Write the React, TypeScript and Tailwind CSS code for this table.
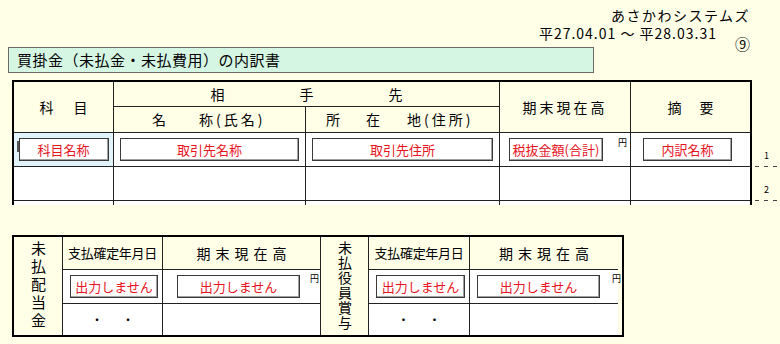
import React from "react";

const jp = "font-['Noto_Sans_CJK_JP','Noto_Sans',sans-serif]";

function InBox({ label, w }: { label: string; w: string }) {
  return (
    <div
      className={`${w} flex h-[23px] items-center justify-center border border-[#3a3a3a] bg-white text-[13px] leading-none text-[#e8141e] shadow-[inset_-1px_-1px_0_#a0a0a0]`}
    >
      {label}
    </div>
  );
}

function Yen({ className }: { className: string }) {
  return <span className={`absolute text-[9px] leading-none text-black ${className}`}>円</span>;
}

function MainTable() {
  const cell = "border-r border-b border-[#222]";
  return (
    <div className="h-[125px] w-[740px] overflow-hidden border-x-2 border-t-2 border-black">
      <div className="grid grid-cols-[100px_192px_194px_131px_119px] grid-rows-[25px_26px_34px_34px_34px]">
        {/* header */}
        <div className={`${cell} row-span-2 flex items-center justify-center text-[14px] tracking-[20px] pl-[20px]`}>
          科目
        </div>
        <div className={`${cell} col-span-2 flex items-center justify-center text-[14px]`}>
          <div className="flex w-[192px] justify-between">
            <span>相</span>
            <span>手</span>
            <span>先</span>
          </div>
        </div>
        <div className={`${cell} row-span-2 flex items-center justify-center text-[14px] tracking-[3px]`}>
          期末現在高
        </div>
        <div className="row-span-2 flex items-center justify-center border-b border-[#222] text-[14px] tracking-[18px] pl-[18px]">
          摘要
        </div>
        <div className={`${cell} flex items-center text-[14px]`}>
          <span className="ml-[38px]">名</span>
          <span className="ml-[33px] tracking-[3px]">称(氏名)</span>
        </div>
        <div className={`${cell} flex items-center text-[14px]`}>
          <span className="ml-[20px]">所</span>
          <span className="ml-[26px]">在</span>
          <span className="ml-[27px] tracking-[3px]">地(住所)</span>
        </div>

        {/* row 1 */}
        <div className={`${cell} relative flex items-center justify-center bg-[#e2f4fb]`}>
          <span className="absolute left-[3px] top-[8px] h-[11px] w-[2px] bg-[#555]" />
          <InBox label="科目名称" w="w-[90px]" />
        </div>
        <div className={`${cell} flex items-center justify-center bg-white`}>
          <InBox label="取引先名称" w="w-[179px]" />
        </div>
        <div className={`${cell} flex items-center justify-center bg-white`}>
          <InBox label="取引先住所" w="w-[181px]" />
        </div>
        <div className={`${cell} relative flex items-center bg-white pl-[9px]`}>
          <InBox label="税抜金額(合計)" w="w-[94px] text-[12px]" />
          <Yen className="left-[118px] top-[5px]" />
        </div>
        <div className="flex items-center justify-center border-b border-[#222] bg-white pr-[6px]">
          <InBox label="内訳名称" w="w-[89px]" />
        </div>

        {/* row 2 */}
        <div className={`${cell} bg-white`} />
        <div className={`${cell} bg-white`} />
        <div className={`${cell} bg-white`} />
        <div className={`${cell} bg-white`} />
        <div className="border-b border-[#222] bg-white" />

        {/* row 3 (clipped) */}
        <div className={`${cell} bg-white`} />
        <div className={`${cell} bg-white`} />
        <div className={`${cell} bg-white`} />
        <div className={`${cell} bg-white`} />
        <div className="border-b border-[#222] bg-white" />
      </div>
    </div>
  );
}

function RowMarks() {
  return (
    <div className="flex w-[28px] flex-col pt-[53px]">
      {["1", "2"].map((n) => (
        <div key={n} className="flex h-[34px] flex-col">
          <div className="flex flex-1 items-end justify-end pb-[6px] pr-[11px] text-[9px] leading-none">{n}</div>
          <div className="ml-[3px] h-px bg-[repeating-linear-gradient(90deg,#444_0_4px,transparent_4px_9px)]" />
        </div>
      ))}
    </div>
  );
}

function SubTable() {
  const cell = "border-r border-b border-[#222]";
  const vcell = "border-r border-[#222] flex items-center justify-center";
  return (
    <div className="h-[102px] w-[612px] border-2 border-black">
      <div className="grid grid-cols-[49px_100px_158px_48px_101px_148px] grid-rows-[33px_34px_31px]">
        <div className={`${vcell} row-span-3`}>
          <span className="text-[15px] leading-[16px] tracking-[3px] [writing-mode:vertical-rl]">未払配当金</span>
        </div>
        <div className={`${cell} flex items-center justify-center text-[13px] tracking-[-0.3px]`}>支払確定年月日</div>
        <div className={`${cell} flex items-center justify-center text-[14px] tracking-[5px] pl-[5px]`}>期末現在高</div>
        <div className={`${vcell} row-span-3`}>
          <span className="text-[14px] leading-[15px] tracking-[1px] [writing-mode:vertical-rl]">未払役員賞与</span>
        </div>
        <div className={`${cell} flex items-center justify-center text-[13px] tracking-[-0.3px]`}>支払確定年月日</div>
        <div className="flex items-center justify-center border-b border-[#222] text-[14px] tracking-[5px] pl-[5px]">期末現在高</div>

        <div className={`${cell} flex items-center justify-center bg-white pl-[3px]`}>
          <InBox label="出力しません" w="w-[88px]" />
        </div>
        <div className={`${cell} relative flex items-center bg-white pl-[14px]`}>
          <InBox label="出力しません" w="w-[123px]" />
          <Yen className="left-[147px] top-[4px]" />
        </div>
        <div className={`${cell} flex items-center justify-center bg-white pl-[3px]`}>
          <InBox label="出力しません" w="w-[89px]" />
        </div>
        <div className="relative flex items-center border-b border-[#222] bg-white pl-[7px]">
          <InBox label="出力しません" w="w-[123px]" />
          <Yen className="left-[142px] top-[4px]" />
        </div>

        <div className="flex items-center justify-center gap-[19px] border-r border-[#222] bg-white text-[12px]">
          <span>・</span>
          <span>・</span>
        </div>
        <div className="border-r border-[#222] bg-white" />
        <div className="flex items-center justify-center gap-[19px] border-r border-[#222] bg-white text-[12px]">
          <span>・</span>
          <span>・</span>
        </div>
        <div className="bg-white" />
      </div>
    </div>
  );
}

export default function App() {
  return (
    <div className={`h-[344px] w-[780px] overflow-hidden bg-[#ffffe8] text-black ${jp}`}>
      <div className="flex h-[47px] flex-col items-end pr-[30px]">
        <div className="mt-[6px] text-[14px] leading-[18px] tracking-[1.5px]">あさかわシステムズ</div>
        <div className="flex items-start">
          <span className="mt-[1px] text-[14px] leading-[17px] tracking-[1px]">平27.04.01 ～ 平28.03.31</span>
          <span className="ml-[18px] mt-[12px] text-[15px] leading-[15px]">⑨</span>
        </div>
      </div>
      <div className="ml-[8px] flex h-[26px] w-[586px] items-center border border-[#6b6b6b] bg-[#d6f6e4] pl-[8px] text-[15px] tracking-[0.5px]">
        買掛金（未払金・未払費用）の内訳書
      </div>
      <div className="ml-[12px] mt-[7px] flex">
        <MainTable />
        <RowMarks />
      </div>
      <div className="ml-[12px] mt-[30px]">
        <SubTable />
      </div>
    </div>
  );
}
